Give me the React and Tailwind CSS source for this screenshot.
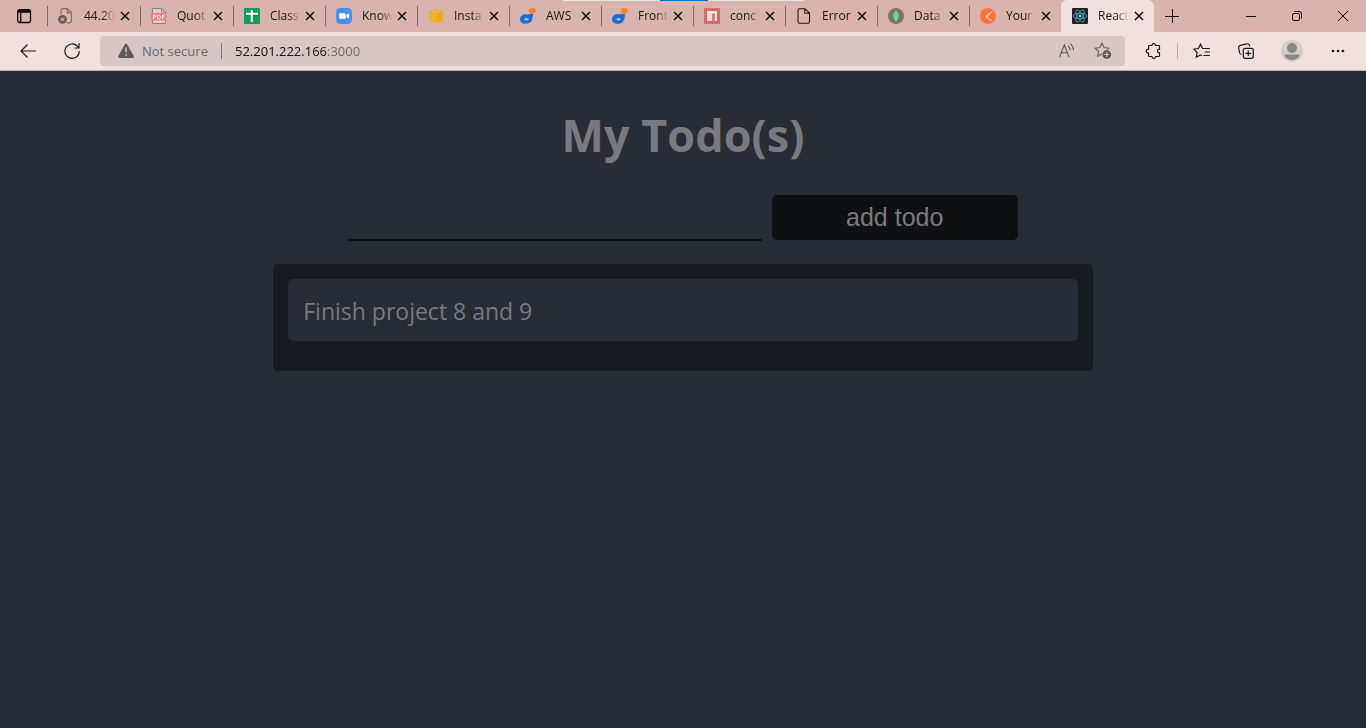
import { useState } from "react";

const BrokenPage = () => (
  <svg viewBox="0 0 16 16" className="size-4 shrink-0" fill="none">
    <path d="M3 6.500V2.200C3 1.200 3.600.6 4.500.6h4.800L13.400 4.300V13.300c0 1-.6 1.600-1.500 1.600H8.500M9.300 1v3.600h3.600" stroke="#806c68" strokeWidth="1.100" />
    <circle cx="4.500" cy="11.300" r="4.400" fill="#6b5a57" />
    <path d="M3 9.800l3 3M6 9.800l-3 3" stroke="#d9b3ad" strokeWidth="1.100" />
  </svg>
);

const PdfIcon = () => (
  <svg viewBox="0 0 16 16" className="size-4 shrink-0">
    <path d="M1.500.5h9L14.500 4v11.500h-13z" fill="#e2cfcc" stroke="#8f7e7b" />
    <path d="M10.500.5V4h4" fill="none" stroke="#8f7e7b" />
    <rect x="0" y="5" width="15.500" height="7.500" rx="1" fill="#ea7f7c" />
    <path d="M2.500 11V7h1.300a1.100 1.100 0 0 1 0 2.400H2.500M6.700 7v4h.9c2.200 0 2.200-4 0-4zM11.500 11V7h2.300M11.500 9h1.900" fill="none" stroke="#fff" strokeWidth=".9" />
  </svg>
);

const SheetIcon = () => (
  <svg viewBox="0 0 16 16" className="size-4 shrink-0">
    <rect width="16" height="16" rx="1.200" fill="#109d58" />
    <path d="M7.800 2v12M2 5.800h12" stroke="#fff" strokeWidth="2" />
  </svg>
);

const ZoomIcon = () => (
  <svg viewBox="0 0 16 16" className="size-4 shrink-0">
    <rect width="16" height="16" rx="4.500" fill="#4490fb" />
    <path d="M3 5.300h5.200c1 0 1.500.6 1.500 1.500v3.900H4.500C3.500 10.700 3 10.100 3 9.200zM10.300 7.100L13 5.300v5.400l-2.700-1.800z" fill="#fff" />
  </svg>
);

const BoxIcon = () => (
  <svg viewBox="0 0 16 16" className="size-4 shrink-0">
    <path d="M1 3.500L8 1l7 2.500L8 5.800z" fill="#edab22" />
    <path d="M1 3.900l7 2V15.200L1 12.900z" fill="#f2b22a" />
    <path d="M15 3.900l-7 2V15.200l7-2.300z" fill="#eeab24" />
    <path d="M1 3.800l7 2 7-2" fill="none" stroke="#dfa44a" strokeWidth=".6" />
    <path d="M5 2.700l6.500 1.600M11 2.600L4.500 4.300" stroke="#f8c04a" strokeWidth=".7" />
  </svg>
);

const DropIcon = () => (
  <svg viewBox="0 0 16 16" className="size-4 shrink-0">
    <path d="M13.200 5.500L12.300 11c-.7 3-3 4.800-6.200 4.800C2.500 15.800 0 14 0 11.200c0-3 2.600-5 6-5 2.700 0 4.500-.4 7.200-.7z" fill="#1670dc" />
    <ellipse cx="6.500" cy="11.200" rx="2.200" ry="1.200" fill="#d9b3ad" />
    <path d="M8.500 3c0-2 1.700-3 3.700-3 2 0 3.600.8 3.600 2.500 0 2-1.500 3.300-3.400 3.200C10 5.500 8.500 4.700 8.500 3z" fill="#ff8226" />
  </svg>
);

const NpmIcon = () => (
  <svg viewBox="0 0 16 16" className="size-4 shrink-0">
    <rect width="16" height="16" fill="#d46b69" />
    <path d="M3 3h10v10h-2.300V5.500H8.200V13H3z" fill="#f1dedc" />
  </svg>
);

const PageIcon = () => (
  <svg viewBox="0 0 16 16" className="size-4 shrink-0" fill="none" stroke="#1b1615" strokeWidth="1.100">
    <path d="M3.500.7h5.500L13.500 5v8.800c0 1-.5 1.500-1.500 1.500H3.500c-1 0-1.500-.5-1.500-1.500V2.200C2 1.200 2.500.7 3.500.7zM8.800 1v4.200h4.400" />
  </svg>
);

const LeafIcon = () => (
  <svg viewBox="0 0 16 16" className="size-4 shrink-0">
    <circle cx="8" cy="8" r="8" fill="#7c7471" />
    <path d="M8 2c2 2 3 3.800 3 5.800 0 2.200-1.300 3.700-2.600 4.700L8 14l-.4-1.500C6.300 11.500 5 10 5 7.800 5 5.800 6 4 8 2z" fill="#6fd08a" />
    <path d="M8 6v8" stroke="#a7e0b3" strokeWidth=".7" />
  </svg>
);

const ArrowDisc = () => (
  <svg viewBox="0 0 16 16" className="size-4 shrink-0">
    <circle cx="8" cy="8" r="8" fill="#ff7139" />
    <path d="M12.500 3L6 8.500M5.500 8.800l6 4M6 8.500l3-.8" fill="none" stroke="#f6cdbd" strokeWidth="1.300" />
  </svg>
);

const ReactIcon = () => (
  <svg viewBox="0 0 16 16" className="size-4 shrink-0">
    <rect width="16" height="16" rx="1" fill="#222225" />
    <g fill="none" stroke="#4fa9bf" strokeWidth=".8">
      <ellipse cx="8" cy="8" rx="6.800" ry="2.700" />
      <ellipse cx="8" cy="8" rx="6.800" ry="2.700" transform="rotate(60 8 8)" />
      <ellipse cx="8" cy="8" rx="6.800" ry="2.700" transform="rotate(120 8 8)" />
    </g>
    <circle cx="8" cy="8" r="1.400" fill="#61d0e8" />
  </svg>
);

const tabs = [
  { title: "44.20", Icon: BrokenPage, fade: true, wide: true },
  { title: "Quot", Icon: PdfIcon, fade: true, wide: true },
  { title: "Class", Icon: SheetIcon, fade: true },
  { title: "Know", Icon: ZoomIcon, fade: true },
  { title: "Insta", Icon: BoxIcon, fade: true },
  { title: "AWS", Icon: DropIcon },
  { title: "Front", Icon: DropIcon, fade: true },
  { title: "conc", Icon: NpmIcon, fade: true },
  { title: "Error", Icon: PageIcon },
  { title: "Data", Icon: LeafIcon, fade: true },
  { title: "Your", Icon: ArrowDisc, fade: true },
  { title: "React", Icon: ReactIcon, fade: true, wide: true, active: true },
];

function Tab({ title, Icon, active, fade, wide }) {
  return (
    <div className={`flex h-8 min-w-0 items-center ${wide ? "w-[93px]" : "w-[92px]"} ${active ? "rounded-t-md bg-[#f0e1e0]" : ""}`}>
      <span className={`h-5 w-px shrink-0 ${active ? "" : "bg-[#806a66]"}`} />
      <button role="tab" aria-selected={!!active} className="flex min-w-0 flex-1 items-center gap-2.5 pl-2.5">
        <Icon />
        <span
          className={`w-8 bg-clip-text text-left text-[12px] leading-4 whitespace-nowrap text-transparent ${
            fade ? "bg-[linear-gradient(90deg,#1a1414_18px,transparent_31px)]" : "bg-[#1a1414]"
          }`}
        >
          {title}
        </span>
      </button>
      <button aria-label={`Close ${title}`} className="mr-[7px] -ml-1 grid size-4 shrink-0 place-items-center">
        <svg viewBox="0 0 10 10" className="size-2.5" stroke="#120e0e" strokeWidth="1.500">
          <path d="M1 1l8 8M9 1l-8 8" />
        </svg>
      </button>
    </div>
  );
}

function TabStrip() {
  return (
    <header className="relative flex h-8 bg-[#d9b3ad]">
      <button aria-label="Tab actions" className="grid w-[47px] shrink-0 place-items-center">
        <svg viewBox="0 0 16 16" className="size-4" fill="none" stroke="#120e0e" strokeWidth="1.300">
          <rect x="1.700" y="1.700" width="12.800" height="12.800" rx="2" />
          <path d="M2 3.400h12.500" strokeWidth="2.800" />
          <path d="M4.700 5v9.500" />
        </svg>
      </button>
      <div role="tablist" className="flex min-w-0">
        {tabs.map((tab, i) => <Tab key={i} {...tab} />)}
      </div>
      <button aria-label="New tab" className="grid w-[35px] shrink-0 place-items-center">
        <svg viewBox="0 0 14 14" className="size-3.5" stroke="#120e0e"><path d="M7.500 0v14M0 7.500h14" /></svg>
      </button>
      <div className="ml-auto flex shrink-0">
        <button aria-label="Minimize" className="grid w-[46px] place-items-center">
          <svg viewBox="0 0 10 10" className="size-2.5" stroke="#120e0e"><path d="M0 5.500h10" /></svg>
        </button>
        <button aria-label="Restore" className="grid w-[46px] place-items-center">
          <svg viewBox="0 0 10 10" className="size-2.5" fill="none" stroke="#120e0e">
            <rect x=".5" y="2.500" width="7" height="7" rx="1.500" />
            <path d="M2.500.5H7A2.500 2.500 0 0 1 9.500 3v4.500" />
          </svg>
        </button>
        <button aria-label="Close window" className="grid w-[46px] place-items-center">
          <svg viewBox="0 0 10 10" className="size-2.5" stroke="#120e0e"><path d="M0 0l10 10M10 0L0 10" /></svg>
        </button>
      </div>
      <div className="absolute top-0 left-[563px] flex h-px w-[241px] justify-center bg-[#e3e3e3]">
        <span className="h-px w-12 bg-[#0a74d6]" />
      </div>
    </header>
  );
}

function ToolButton({ label, children, wide }) {
  return (
    <button aria-label={label} className={`grid h-8 shrink-0 place-items-center ${wide ? "w-12" : "w-11"}`}>
      {children}
    </button>
  );
}

const starPath = "M8 1.200l2.100 4.300 4.700.7-3.400 3.300.8 4.700L8 12l-4.200 2.200.8-4.700L1.200 6.200l4.700-.7z";

function Toolbar() {
  return (
    <nav className="flex h-[39px] items-center border-b border-[#b9adac] bg-[#f0e1e0] px-1.5">
      <ToolButton label="Back">
        <svg viewBox="0 0 16 16" className="size-4" fill="none" stroke="#1a1616" strokeWidth="1.200"><path d="M7.500 1.500L1 8l6.500 6.500M1 8h15" /></svg>
      </ToolButton>
      <ToolButton label="Refresh">
        <svg viewBox="0 0 16 16" className="size-4" fill="none" stroke="#1a1616" strokeWidth="1.200">
          <path d="M15.300 8.300A7.200 7.200 0 1 1 13.300 3.200L15 5M15 .3V5h-4.700" />
        </svg>
      </ToolButton>
      <div className="mx-1.5 flex h-[30px] min-w-0 flex-1 items-center rounded bg-[#d5c7c6] pr-1 pl-[18px]">
        <svg viewBox="0 0 16 16" className="size-4 shrink-0">
          <path d="M7 1.300Q8-.2 9 1.300L15.700 13q.7 1.700-1 1.900H1.300Q-.4 14.700.3 13z" fill="#5d5857" />
          <path d="M8 4.500v5M8 11v1.800" stroke="#d5c7c6" strokeWidth="1.500" />
        </svg>
        <span className="ml-2 w-[79px] shrink-0 text-[13px] leading-5 whitespace-nowrap text-[#6b6564]">Not secure</span>
        <span className="h-4 w-px shrink-0 bg-[#807775]" />
        <input
          aria-label="Address"
          defaultValue="52.201.222.166:3000"
          className="ml-[13px] min-w-0 flex-1 bg-[linear-gradient(90deg,#0d0b0b_93px,#6b6564_93px)] bg-clip-text text-[13px] leading-5 text-transparent outline-none"
        />
        <button aria-label="Read aloud" className="grid w-9 place-items-center">
          <svg viewBox="0 0 16 16" className="size-4" fill="none" stroke="#5f5958" strokeWidth="1.100">
            <path d="M.6 14L5.300 1.800 10 14M2.300 9.800h6M9.300 3q1.700 1.600 1.700 4.300M11.500.8q3 2.500 3 6.500" />
          </svg>
        </button>
        <button aria-label="Add to favorites" className="grid w-9 place-items-center">
          <svg viewBox="0 0 18 18" className="size-[18px]" fill="none" stroke="#6b6564" strokeWidth="1.200">
            <path d={starPath} />
            <circle cx="12.800" cy="12.500" r="5" fill="#d5c7c6" stroke="none" />
            <circle cx="12.800" cy="12.500" r="4.300" fill="#585352" stroke="none" />
            <path d="M12.800 10v5M10.300 12.500h5" stroke="#d5c7c6" />
          </svg>
        </button>
      </div>
      <ToolButton label="Extensions">
        <svg viewBox="0 0 16 16" className="size-4" fill="none" stroke="#1a1616" strokeWidth="1.200" strokeLinejoin="round">
          <path d="M4.300 2.500H7c-.1-2.400 3.700-2.400 3.600 0h3.200c.4 0 .7.3.7.700v3c-2.700-.3-2.700 4 0 3.700v2.900c0 .4-.3.700-.7.700h-3.200c.1 2.400-3.700 2.400-3.600 0H4.300c-.4 0-.7-.3-.7-.700V10C.5 10.200.5 6 3.600 6.200v-3c0-.4.3-.7.700-.7z" />
        </svg>
      </ToolButton>
      <span className="mx-0.5 h-4 w-px shrink-0 bg-[#b8abaa]" />
      <ToolButton label="Favorites">
        <svg viewBox="0 0 18 16" className="h-4 w-[18px]" fill="none" stroke="#1a1616" strokeWidth="1.200">
          <path d="M10.500 5.500H9.600L7.500 1.200 5.400 5.500l-4.700.7 3.400 3.300-.8 4.700L7.500 12l1.300.7M10.500 5.500H17M11.500 9H17M10.500 12.500H17" />
        </svg>
      </ToolButton>
      <ToolButton label="Collections">
        <svg viewBox="0 0 16 16" className="size-4" fill="none" stroke="#1a1616" strokeWidth="1.200">
          <rect x="5.300" y="5.300" width="10" height="10" rx="2" />
          <path d="M10.300 7.500v5.600M7.500 10.300h5.600M3.300 11.500Q1.800 11 1.500 9.500L.7 4.800Q.5 2.800 2.300 2.300L8.800.8q2-.3 2.600 1.500l.3 1" />
        </svg>
      </ToolButton>
      <ToolButton label="Profile" wide>
        <svg viewBox="0 0 22 22" className="size-[22px]">
          <circle cx="11" cy="11" r="11" fill="#d0cdca" />
          <circle cx="11" cy="8" r="5" fill="#8b8784" />
          <path d="M3.500 16q0-1.600 1.600-1.600h11.800q1.600 0 1.600 1.600c-1.400 2.700-4 4-7.500 4s-6.100-1.300-7.500-4z" fill="#8b8784" />
        </svg>
      </ToolButton>
      <ToolButton label="Settings and more">
        <svg viewBox="0 0 14 4" className="h-1 w-3.5" fill="#1a1616">
          <circle cx="2" cy="2" r="1.300" /><circle cx="7" cy="2" r="1.300" /><circle cx="12" cy="2" r="1.300" />
        </svg>
      </ToolButton>
    </nav>
  );
}

export default function App() {
  const [text, setText] = useState("");
  const [todos, setTodos] = useState(["Finish project 8 and 9"]);

  function addTodo(event) {
    event.preventDefault();
    if (!text.trim()) return;
    setTodos([...todos, text.trim()]);
    setText("");
  }

  return (
    <div className="flex min-h-screen flex-col bg-[#282c34] font-['Open_Sans','Noto_Sans',sans-serif]">
      <TabStrip />
      <Toolbar />
      <main className="flex flex-1 flex-col items-center pt-8 text-[#787a80]">
        <h1 className="text-[45px] leading-[64px] font-bold">My Todo(s)</h1>
        <form onSubmit={addTodo} className="mt-7 flex w-[49%] items-start gap-2.5">
          <input
            aria-label="New todo"
            value={text}
            onChange={(event) => setText(event.target.value)}
            className="h-[46px] min-w-0 flex-1 border-b-2 border-[#0f1011] bg-transparent text-2xl outline-none"
          />
          <button className="h-[45px] w-[18vw] rounded-[5px] bg-[#0f1011] font-['Liberation_Sans',sans-serif] text-[25px]">
            add todo
          </button>
        </form>
        <ul className="mt-[23px] w-3/5 rounded-[5px] bg-[#171a1e] p-[15px]">
          {todos.map((todo, i) => (
            <li key={i} className="mb-[15px] rounded-[5px] bg-[#282c34] px-[15px] pt-4 pb-3.5 text-[23px] leading-8">
              {todo}
            </li>
          ))}
        </ul>
      </main>
    </div>
  );
}
